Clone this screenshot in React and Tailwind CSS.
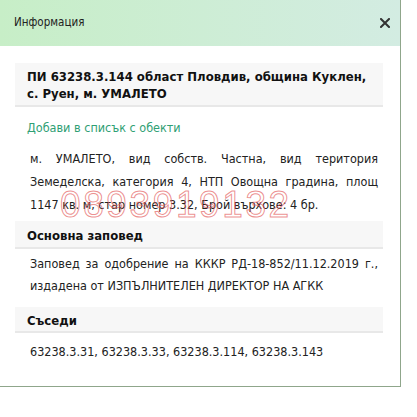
export default function App() {
  const font = { fontFamily: '"DejaVu Sans Condensed", "DejaVu Sans", Verdana, sans-serif' };
  return (
    <div className="w-[417px] h-[417px] bg-white relative overflow-hidden" style={font}>
      <div className="w-[401px] h-[387px] border-r border-b border-[#8fa68b] flex flex-col bg-white">
        <div className="h-[46px] shrink-0 flex items-center justify-between pl-[14px] pr-[10px] bg-gradient-to-r from-[#c7eec7] to-[#d3ece2]">
          <span className="text-[11.5px] text-[#222]">Информация</span>
          <svg width="10" height="10" viewBox="0 0 10 10" className="text-[#333]">
            <path d="M1 1 L9 9 M9 1 L1 9" stroke="currentColor" strokeWidth="2" strokeLinecap="square" />
          </svg>
        </div>
        <div className="pt-[17px] pl-[15px] pr-[17px] text-[#222]">
          <div className="bg-[#f7f7f7] border-b-2 border-[#e8e8e8] px-[12px] pt-[5px] pb-[3px] font-bold text-[13px] leading-[17px] text-[#111]">
            ПИ 63238.3.144 област Пловдив, община Куклен, с. Руен, м. УМАЛЕТО
          </div>
          <div className="mt-[11px] pl-[12px] text-[12.5px] leading-[20px] text-[#2fa074]">
            Добави в списък с обекти
          </div>
          <div className="relative mt-[9px] pl-[15px] pr-[5px] text-[12.5px] leading-[23px] text-justify">
            м. УМАЛЕТО, вид собств. Частна, вид територия Земеделска, категория 4, НТП Овощна градина, площ 1147 кв. м, стар номер 3.32, Брой върхове: 4 бр.
            <span
              className="absolute left-[45px] top-[39px] text-[37px] leading-none tracking-[2.6px] text-transparent [-webkit-text-stroke:1px_rgba(228,95,95,0.7)] pointer-events-none"
              style={{ fontFamily: '"Liberation Sans", Arial, sans-serif' }}
            >
              0893919132
            </span>
          </div>
          <div className="mt-[5px] bg-[#f7f7f7] border-b-2 border-[#e8e8e8] px-[12px] pt-[6px] pb-[3px] font-bold text-[13px] leading-[17px] text-[#111]">
            Основна заповед
          </div>
          <div className="mt-[4px] pl-[15px] pr-[5px] text-[12.5px] leading-[22px] text-justify">
            Заповед за одобрение на КККР РД-18-852/11.12.2019 г., издадена от ИЗПЪЛНИТЕЛЕН ДИРЕКТОР НА АГКК
          </div>
          <div className="mt-[10px] bg-[#f7f7f7] border-b-2 border-[#e8e8e8] px-[12px] pt-[5px] pb-[2px] font-bold text-[13px] leading-[17px] text-[#111]">
            Съседи
          </div>
          <div className="mt-[8px] pl-[15px] pr-[5px] text-[12.5px] leading-[22px]">
            63238.3.31, 63238.3.33, 63238.3.114, 63238.3.143
          </div>
        </div>
      </div>
    </div>
  );
}
